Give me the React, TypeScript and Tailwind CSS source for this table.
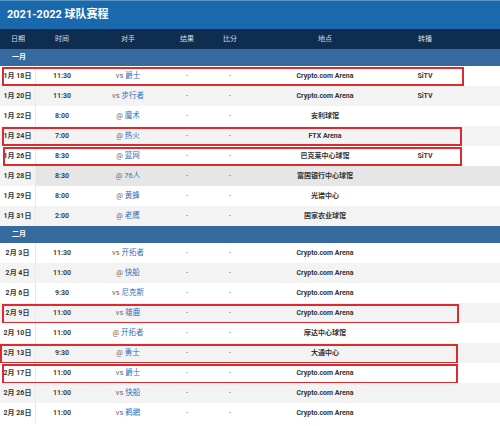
import React from "react";

type Row = {
  date: string;
  time: string;
  pre: string;
  team: string;
  venue: string;
  tv?: string;
  bg: "w" | "g" | "h";
  box?: string;
};

const jan: Row[] = [
  { date: "1月 18日", time: "11:30", pre: "vs", team: "爵士", venue: "Crypto.com Arena", tv: "SiTV", bg: "w", box: "left-[2px] right-[36px] top-[1px] bottom-0" },
  { date: "1月 20日", time: "11:30", pre: "vs", team: "步行者", venue: "Crypto.com Arena", tv: "SiTV", bg: "g" },
  { date: "1月 22日", time: "8:00", pre: "@", team: "魔术", venue: "安利球馆", bg: "w" },
  { date: "1月 24日", time: "7:00", pre: "@", team: "热火", venue: "FTX Arena", bg: "g", box: "left-[2px] right-[38px] top-[1px] bottom-0" },
  { date: "1月 26日", time: "8:30", pre: "@", team: "篮网", venue: "巴克莱中心球馆", tv: "SiTV", bg: "w", box: "left-[3px] right-[38px] top-[1px] bottom-0" },
  { date: "1月 28日", time: "8:30", pre: "@", team: "76人", venue: "富国银行中心球馆", bg: "h" },
  { date: "1月 29日", time: "8:00", pre: "@", team: "黄蜂", venue: "光谱中心", bg: "w" },
  { date: "1月 31日", time: "2:00", pre: "@", team: "老鹰", venue: "国家农业球馆", bg: "g" },
];

const feb: Row[] = [
  { date: "2月 3日", time: "11:30", pre: "vs", team: "开拓者", venue: "Crypto.com Arena", bg: "w" },
  { date: "2月 4日", time: "11:00", pre: "@", team: "快船", venue: "Crypto.com Arena", bg: "g" },
  { date: "2月 6日", time: "9:30", pre: "vs", team: "尼克斯", venue: "Crypto.com Arena", bg: "w" },
  { date: "2月 9日", time: "11:00", pre: "vs", team: "雄鹿", venue: "Crypto.com Arena", bg: "g", box: "left-[2px] right-[41px] top-[1px] bottom-[-1px]" },
  { date: "2月 10日", time: "11:00", pre: "@", team: "开拓者", venue: "摩达中心球馆", bg: "w" },
  { date: "2月 13日", time: "9:30", pre: "@", team: "勇士", venue: "大通中心", bg: "g", box: "left-0 right-[42px] top-[1px] bottom-[-1px]" },
  { date: "2月 17日", time: "11:00", pre: "vs", team: "爵士", venue: "Crypto.com Arena", bg: "w", box: "left-[2px] right-[42px] top-[1px] bottom-[-1px]" },
  { date: "2月 26日", time: "11:00", pre: "vs", team: "快船", venue: "Crypto.com Arena", bg: "g" },
  { date: "2月 28日", time: "11:00", pre: "vs", team: "鹈鹕", venue: "Crypto.com Arena", bg: "w" },
];

const gridCols = "grid grid-cols-[36px_52px_80px_38px_48px_142px_58px_1fr]";

function DataRow({ r }: { r: Row }) {
  const rowBg = r.bg === "w" ? "bg-white" : r.bg === "g" ? "bg-[#f3f3f3]" : "bg-[#e6e6e6]";
  const dateBg = r.bg === "h" ? "bg-[#f3f3f3]" : "";
  return (
    <div className={`${gridCols} relative h-[20px] items-center ${rowBg} text-[7px] text-[#444]`}>
      <div className={`h-full flex items-center justify-center font-bold text-[#333] border-r border-[#e9e9e9] ${dateBg}`}>{r.date}</div>
      <div className="text-center font-bold text-[#444]">{r.time}</div>
      <div className="text-center text-[7.5px]">
        <span className="text-[#666]">{r.pre}</span>{" "}
        <span className="text-[#2f6fb8]">{r.team}</span>
      </div>
      <div className="text-center text-[#666]">-</div>
      <div className="text-center text-[#666]">-</div>
      <div className="text-center font-bold text-[#333]">{r.venue}</div>
      <div className="text-center font-bold text-[#333]">{r.tv ?? ""}</div>
      <div />
      {r.box && <div className={`absolute ${r.box} border-2 border-[#dd2a2e] pointer-events-none`} />}
    </div>
  );
}

function Month({ label }: { label: string }) {
  return (
    <div className="h-[17px] bg-[#366a9e] flex items-center pl-[12px] text-[7px] font-bold text-white">
      {label}
    </div>
  );
}

export default function App() {
  return (
    <div
      className="w-[500px] h-[426px] overflow-hidden bg-white"
      style={{ fontFamily: 'Roboto, "Noto Sans CJK SC", sans-serif' }}
    >
      <div className="h-[29px] bg-[#1b69ad] border-t border-[#5b95c8] flex items-center pl-[7px] text-[11px] font-bold text-white">
        2021-2022 球队赛程
      </div>
      <div className={`${gridCols} h-[20px] items-center bg-[#0f2d4f] text-[7px] text-[#d4dde6]`}>
        <div className="text-center">日期</div>
        <div className="text-center">时间</div>
        <div className="text-center">对手</div>
        <div className="text-center">结果</div>
        <div className="text-center">比分</div>
        <div className="text-center">地点</div>
        <div className="text-center">转播</div>
        <div />
      </div>
      <Month label="一月" />
      {jan.map((r) => (
        <DataRow key={r.date} r={r} />
      ))}
      <Month label="二月" />
      {feb.map((r) => (
        <DataRow key={r.date} r={r} />
      ))}
    </div>
  );
}
